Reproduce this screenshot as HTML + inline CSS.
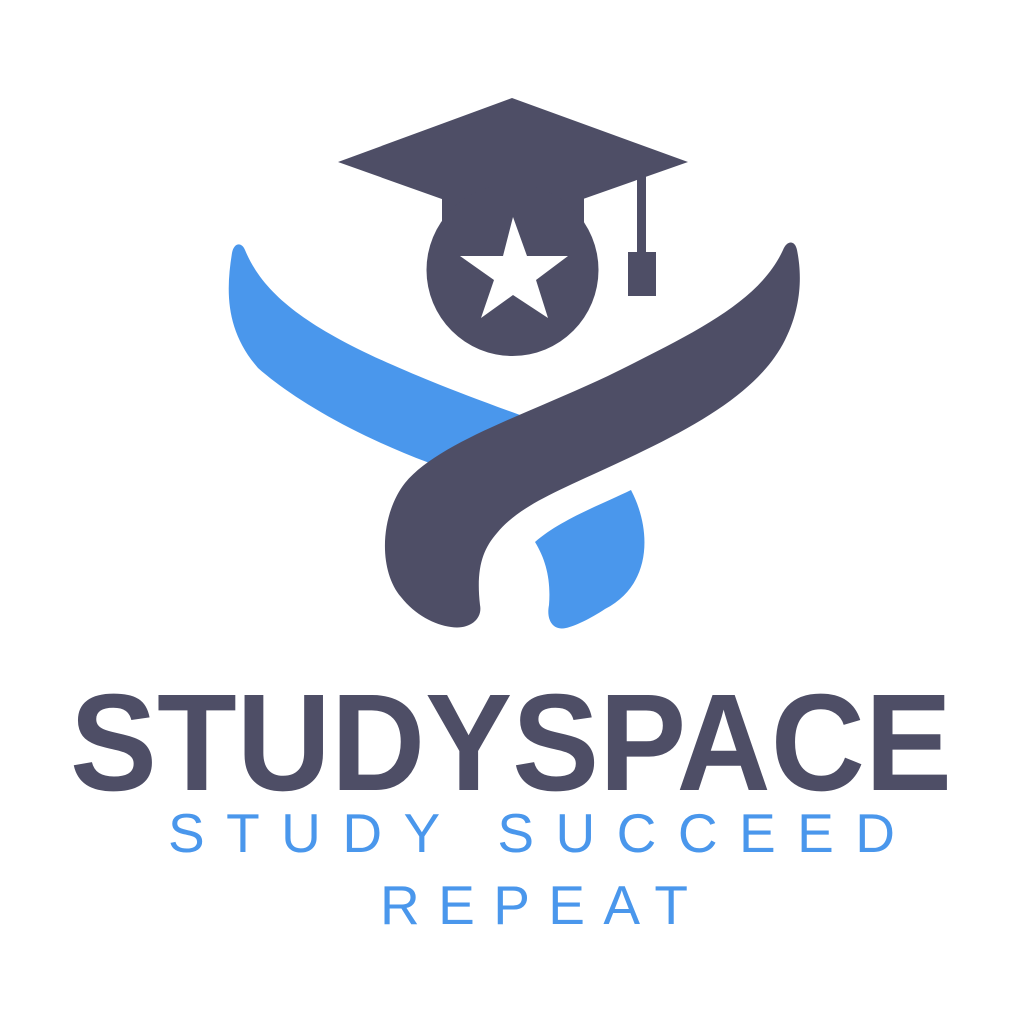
<!DOCTYPE html>
<html><head><style>html,body{margin:0;padding:0;background:#fff;}svg{display:block}</style></head>
<body>
<svg width="1016" height="1012" viewBox="0 0 1016 1012" xmlns="http://www.w3.org/2000/svg">
<rect width="1016" height="1012" fill="#fff"/>
<!-- cap -->
<polygon points="512,98 688,162 512,224 338,162" fill="#4e4e66"/>
<polygon points="442,185 584,185 584,240 442,240" fill="#4e4e66"/>
<circle cx="512.5" cy="270" r="86" fill="#4e4e66"/>
<rect x="637" y="160" width="9" height="96" fill="#4e4e66"/>
<rect x="628" y="252" width="28" height="44" fill="#4e4e66"/>
<polygon points="513,217 527,256 568,256 536,280 548,318 513,295 481,318 494,280 460,256 503,256" fill="#fff"/>
<!-- blue left swoosh -->
<path d="M245,250 C270,310 340,350 520,415 L480,480 C380,450 300,405 258,368 C225,330 226,290 232,253 C234,242 242,242 245,250 Z" fill="#4a97ec"/>
<!-- blue drop -->
<path d="M535,542 C560,520 600,505 631,490 C652,530 652,585 605,609 C590,619 575,626 566,628 C553,631 546,620 549,605 C551,580 546,560 535,542 Z" fill="#4a97ec"/>
<!-- dark swoosh -->
<path d="M783,250 C760,300 700,330 620,370 C540,410 440,440 405,483 C380,515 378,570 401,597 C415,615 435,625 451,627 C468,630 483,620 480,605 C476,570 482,550 497,533 C520,505 560,490 620,462 C700,425 760,390 785,340 C805,300 800,265 797,250 C795,240 787,240 783,250 Z" fill="#4e4e66"/>
<!-- text -->
<text x="70" y="790" textLength="882" lengthAdjust="spacingAndGlyphs" font-family="Liberation Sans, sans-serif" font-weight="bold" font-size="138" fill="#4e4e66">STUDYSPACE</text>
<text x="168" y="852" textLength="727" lengthAdjust="spacing" font-family="Liberation Sans, sans-serif" font-size="55" fill="#4a97ec">STUDY SUCCEED</text>
<text x="380" y="924" textLength="308" lengthAdjust="spacing" font-family="Liberation Sans, sans-serif" font-size="55" fill="#4a97ec">REPEAT</text>
</svg>
</body></html>
